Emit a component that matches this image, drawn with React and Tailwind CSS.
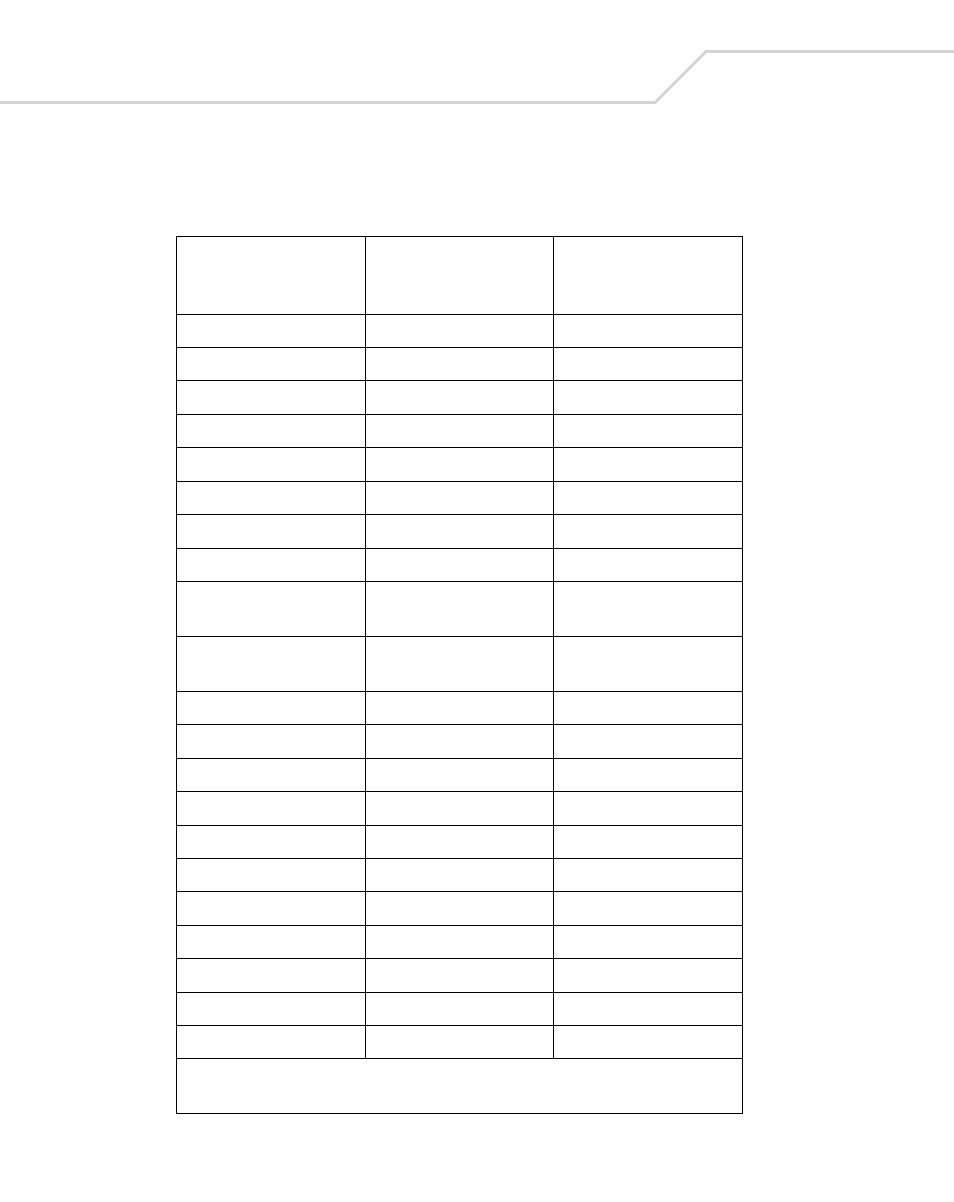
import React from 'react'

// row heights in px (border-box, bottom border included)
const rows = [33, 33, 34, 33, 34, 33, 34, 33, 55, 55, 33, 34, 33, 34, 33, 33, 34, 33, 34, 33, 33]

const Cell = ({w, h}) => (
  <div className={`${w} ${h} border-r border-b border-black`} />
)

const heights = {
  33: 'h-[33px]',
  34: 'h-[34px]',
  55: 'h-[55px]',
}

const App = () => {
  return (
    <div className="w-[954px] h-[1202px] bg-white relative">
      {/* page header rule */}
      <svg width="954" height="110" className="block" viewBox="0 0 954 110">
        <polyline
          points="0,102.5 655,102.5 706,51.5 954,51.5"
          fill="none"
          stroke="#d3d3d3"
          strokeWidth="3"
        />
      </svg>

      <div className="pt-[126px] pl-[176px]">
        <div className="w-[567px] border-l border-t border-black">
          {/* header row */}
          <div className="flex">
            <Cell w="w-[189px]" h="h-[78px]" />
            <Cell w="w-[188px]" h="h-[78px]" />
            <Cell w="w-[189px]" h="h-[78px]" />
          </div>

          {rows.map((r, i) => (
            <div className="flex" key={i}>
              <Cell w="w-[189px]" h={heights[r]} />
              <Cell w="w-[188px]" h={heights[r]} />
              <Cell w="w-[189px]" h={heights[r]} />
            </div>
          ))}

          {/* footnote row */}
          <div className="h-[55px] border-r border-b border-black" />
        </div>
      </div>
    </div>
  )
}

export default App
